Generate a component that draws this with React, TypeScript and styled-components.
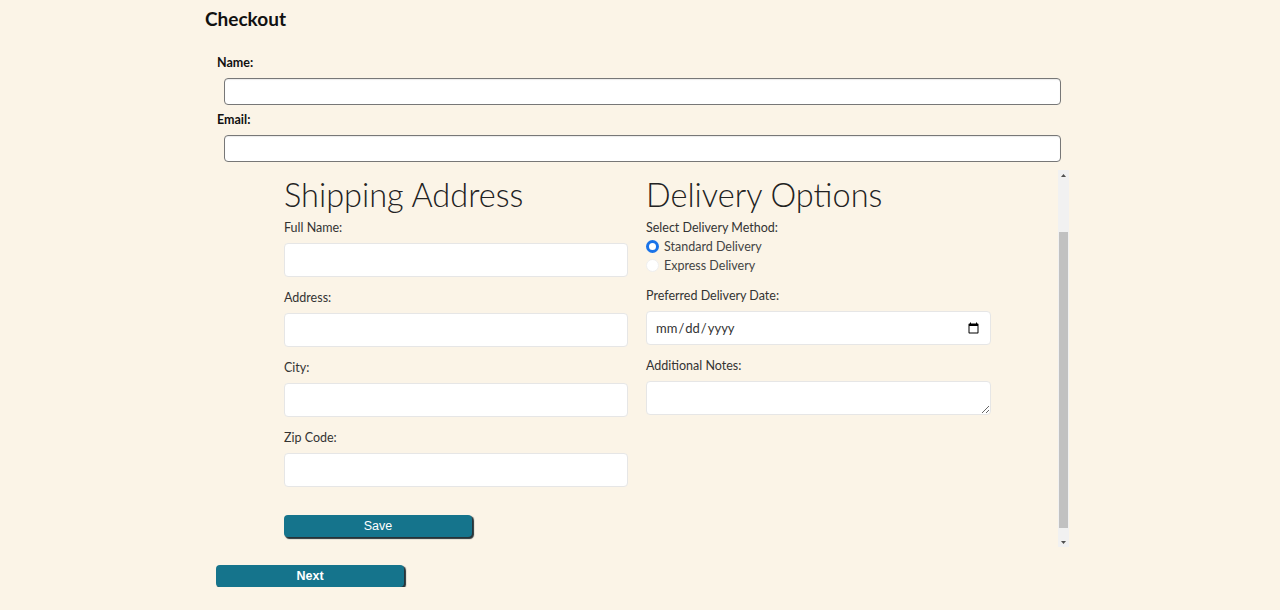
import React, { useEffect, useRef } from "react";
import styled, { createGlobalStyle } from "styled-components";

const GlobalStyle = createGlobalStyle`
  html, body { margin: 0; padding: 0; background: #fbf4e7; }
  body { font-family: Lato, "Open Sans", sans-serif; color: #222; }
  * { box-sizing: border-box; }
`;

const Page = styled.div`
  width: 870px;
  margin: 0 auto;
  padding-top: 8px;
`;

const Title = styled.h1`
  margin: 0 0 25px 0;
  font-family: Lato, sans-serif;
  font-weight: 700;
  font-size: 19px;
  line-height: 22px;
  color: #111;
`;

const Form = styled.form`
  padding: 0 6px 0 12px;
  display: flex;
  flex-direction: column;
`;

const BoldLabel = styled.label`
  font-family: Lato, sans-serif;
  font-weight: 700;
  font-size: 12.5px;
  line-height: 16px;
  color: #111;
  margin-bottom: 7px;
`;

const MainInput = styled.input`
  display: block;
  margin: 0 8px 7px 7px;
  height: 27px;
  border: 1px solid #777;
  border-radius: 4px;
  background: #fff;
  box-shadow: inset 0 1px 1px rgba(0, 0, 0, 0.08);
  font: inherit;
`;

const ScrollFrame = styled.div`
  display: flex;
  height: 377px;
  margin-top: 1px;
`;

const Viewport = styled.div`
  flex: 1;
  overflow: hidden;
`;

const ScrollBar = styled.div`
  width: 11px;
  display: flex;
  flex-direction: column;
  background: #f1f1f1;
`;

const ArrowButton = styled.div`
  height: 10px;
  display: flex;
  align-items: center;
  justify-content: center;
  flex: none;
`;

const Track = styled.div`
  flex: 1;
  display: flex;
  flex-direction: column;
`;

const Thumb = styled.div`
  background: #c1c1c1;
  margin: 0 1px 0 1px;
`;

const Columns = styled.div`
  width: 707px;
  margin: 0 auto;
  padding-top: 76px;
  padding-bottom: 17px;
  display: grid;
  grid-template-columns: 344px 345px;
  column-gap: 18px;
`;

const Column = styled.div`
  display: flex;
  flex-direction: column;
`;

const Heading = styled.h2`
  margin: 0 0 7px 0;
  font-family: Lato, sans-serif;
  font-weight: 300;
  font-size: 32.5px;
  line-height: 36px;
  color: #222;
  white-space: nowrap;
`;

const FieldLabel = styled.label`
  display: block;
  font-family: Lato, sans-serif;
  font-weight: 400;
  font-size: 12.5px;
  line-height: 16px;
  color: #333;
`;

const Field = styled.div`
  display: flex;
  flex-direction: column;
  gap: 7px;
  margin-bottom: 13px;
`;

const TextInput = styled.input`
  height: 34px;
  border: 1px solid #e6e6e6;
  border-radius: 4px;
  background: #fff;
  padding: 0 8px;
  font-family: Lato, sans-serif;
  font-size: 13px;
  color: #333;
`;

const NotesArea = styled.textarea`
  height: 34px;
  border: 1px solid #e6e6e6;
  border-radius: 4px;
  background: #fff;
  font-family: Lato, sans-serif;
  resize: vertical;
`;

const RadioGroup = styled.div`
  display: flex;
  flex-direction: column;
  margin: 1px 0 13px 0;
`;

const RadioRow = styled.label`
  display: flex;
  align-items: center;
  gap: 5px;
  font-family: Lato, sans-serif;
  font-size: 12.5px;
  line-height: 19px;
  color: #444;
`;

const Radio = styled.input`
  appearance: none;
  margin: 0;
  width: 13px;
  height: 13px;
  border-radius: 50%;
  background: #fff;
  border: 1px solid #efefef;
  &:checked {
    border: 3.5px solid #1a73e8;
  }
`;

const ActionButton = styled.button<{ $bold?: boolean }>`
  width: 188px;
  height: 22px;
  background: #15748c;
  color: #fff;
  border: none;
  border-radius: 4px;
  box-shadow: 1.5px 1.5px 1px 0.5px #263338;
  font-family: "Liberation Sans", Arial, sans-serif;
  font-size: 12.5px;
  font-weight: ${(p) => (p.$bold ? 700 : 400)};
  padding: 0;
  cursor: pointer;
`;

const SaveRow = styled.div`
  margin-top: 14px;
`;

const NextRow = styled.div`
  margin-top: 17px;
  margin-left: -1px;
`;

const UpArrow = () => (
  <svg width="5" height="3" viewBox="0 0 5 3">
    <polygon points="2.5,0 5,3 0,3" fill="#505050" />
  </svg>
);
const DownArrow = () => (
  <svg width="5" height="3" viewBox="0 0 5 3">
    <polygon points="0,0 5,0 2.5,3" fill="#505050" />
  </svg>
);

export default function App() {
  const viewRef = useRef<HTMLDivElement>(null);
  useEffect(() => {
    if (viewRef.current) viewRef.current.scrollTop = 69;
  }, []);
  return (
    <>
      <GlobalStyle />
      <Page>
        <Title>Checkout</Title>
        <Form onSubmit={(e) => e.preventDefault()}>
          <BoldLabel>Name:</BoldLabel>
          <MainInput type="text" />
          <BoldLabel>Email:</BoldLabel>
          <MainInput type="email" />
          <ScrollFrame>
            <Viewport ref={viewRef}>
              <Columns>
                <Column>
                  <Heading>Shipping Address</Heading>
                  <Field>
                    <FieldLabel>Full Name:</FieldLabel>
                    <TextInput type="text" />
                  </Field>
                  <Field>
                    <FieldLabel>Address:</FieldLabel>
                    <TextInput type="text" />
                  </Field>
                  <Field>
                    <FieldLabel>City:</FieldLabel>
                    <TextInput type="text" />
                  </Field>
                  <Field>
                    <FieldLabel>Zip Code:</FieldLabel>
                    <TextInput type="text" />
                  </Field>
                  <SaveRow>
                    <ActionButton type="button">Save</ActionButton>
                  </SaveRow>
                </Column>
                <Column>
                  <Heading>Delivery Options</Heading>
                  <FieldLabel>Select Delivery Method:</FieldLabel>
                  <RadioGroup>
                    <RadioRow>
                      <Radio type="radio" name="delivery" defaultChecked />
                      Standard Delivery
                    </RadioRow>
                    <RadioRow>
                      <Radio type="radio" name="delivery" />
                      Express Delivery
                    </RadioRow>
                  </RadioGroup>
                  <Field>
                    <FieldLabel>Preferred Delivery Date:</FieldLabel>
                    <TextInput type="date" />
                  </Field>
                  <Field>
                    <FieldLabel>Additional Notes:</FieldLabel>
                    <NotesArea />
                  </Field>
                </Column>
              </Columns>
            </Viewport>
            <ScrollBar>
              <ArrowButton>
                <UpArrow />
              </ArrowButton>
              <Track>
                <div style={{ height: 52 }} />
                <Thumb style={{ height: 296 }} />
              </Track>
              <ArrowButton>
                <DownArrow />
              </ArrowButton>
            </ScrollBar>
          </ScrollFrame>
          <NextRow>
            <ActionButton type="button" $bold>
              Next
            </ActionButton>
          </NextRow>
        </Form>
      </Page>
    </>
  );
}
